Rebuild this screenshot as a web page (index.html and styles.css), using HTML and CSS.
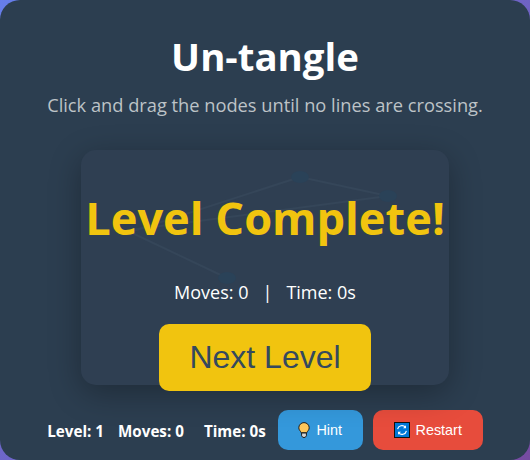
FILE: index.html
```html
<!DOCTYPE html>
<html lang="en">
<head>
<meta charset="utf-8">
<title>Un-tangle</title>
<link rel="stylesheet" href="styles.css">
</head>
<body>
<main class="container">
  <h1 class="title">Un-tangle</h1>
  <p class="subtitle">Click and drag the nodes until no lines are crossing.</p>
  <section class="board">
    <svg class="graph" viewBox="0 0 368 235" width="368" height="235" aria-hidden="true">
      <g class="edges">
        <line x1="49" y1="82" x2="219" y2="27"/>
        <line x1="219" y1="27" x2="307" y2="46"/>
        <line x1="307" y1="46" x2="49" y2="80"/>
        <line x1="49" y1="82" x2="146" y2="128"/>
      </g>
      <g class="nodes">
        <ellipse cx="219" cy="27" rx="9" ry="6"/>
        <ellipse cx="307" cy="46" rx="9" ry="6"/>
        <ellipse cx="146" cy="128" rx="9" ry="6"/>
      </g>
    </svg>
    <div class="overlay">
      <h2 class="complete">Level Complete!</h2>
      <p class="result"><span>Moves: 0</span><span>|</span><span>Time: 0s</span></p>
      <button class="next">Next Level</button>
    </div>
  </section>
  <footer class="footer">
    <div class="stats">
      <span class="stat-level">Level: 1</span>
      <span class="stat-moves">Moves: 0</span>
      <span>Time: 0s</span>
    </div>
    <button class="action hint">
      <svg class="icon" viewBox="0 0 12 16" width="12" height="16" aria-hidden="true"><path d="M6 .6A5.2 5.2 0 0 0 .8 5.8c0 2.2 1.7 3.2 2.5 5h5.4c.8-1.8 2.5-2.8 2.5-5A5.2 5.2 0 0 0 6 .6z" fill="#fdc75b" stroke="#1d1d1d"/><path d="M3.6 11h4.8v2.8L7.2 15.4H4.8l-1.2-1.6z" fill="#d4d4d4" stroke="#1d1d1d"/></svg>
      Hint
    </button>
    <button class="action restart">
      <svg class="icon" viewBox="0 0 16 16" width="16" height="16" aria-hidden="true"><rect x=".5" y=".5" width="15" height="15" fill="#0078d7" stroke="#111"/><path d="M3.6 7.2A4.5 4.5 0 0 1 11.4 5.2M12.4 8.8A4.5 4.5 0 0 1 4.6 10.8" fill="none" stroke="#fff" stroke-width="1.2"/><path d="M12 3.2v3h-3zM4 12.8v-3h3z" fill="#fff"/></svg>
      Restart
    </button>
  </footer>
</main>
</body>
</html>
```
FILE: styles.css
```css
* { box-sizing: border-box; }
html, body { margin: 0; height: 100%; }
body {
  width: 530px;
  height: 460px;
  overflow: hidden;
  background: linear-gradient(135deg, #667eea, #764ba2);
  font-family: "Open Sans", "Noto Sans", sans-serif;
}
.container {
  width: 530px;
  height: 460px;
  background: #2c3e50;
  border-radius: 20px;
  padding: 30px 0 0;
  display: flex;
  flex-direction: column;
  align-items: center;
  color: #fff;
}
.title {
  margin: 0;
  font-size: 38.4px;
  line-height: 52px;
  font-weight: 700;
}
.subtitle {
  margin: 11px 0 0;
  font-size: 18.25px;
  line-height: 24px;
  color: #bdc3c7;
}
.board {
  position: relative;
  width: 368px;
  height: 235px;
  margin-top: 33px;
  border-radius: 15px;
  background: #2f3f52;
  box-shadow: 0 8px 32px rgba(0, 0, 0, .3);
}
.graph { display: block; }
.edges line { stroke: #354659; stroke-width: 2; }
.nodes ellipse { fill: #2a4258; }
.overlay {
  position: absolute;
  inset: 0;
  display: flex;
  flex-direction: column;
  align-items: center;
}
.complete {
  margin: 35px 0 0;
  font-size: 45.2px;
  line-height: 66px;
  font-weight: 700;
  color: #f1c40f;
  white-space: nowrap;
}
.result {
  margin: 29px 0 0;
  font-size: 18px;
  line-height: 24px;
  display: flex;
  gap: 14px;
}
.next {
  margin-top: 20px;
  width: 212px;
  height: 67px;
  flex: none;
  border: 0;
  border-radius: 10px;
  background: #f1c40f;
  color: #34495e;
  font: 32px "Liberation Sans", Arial, sans-serif;
}
.footer {
  margin-top: 25px;
  display: flex;
  align-items: center;
  gap: 10px;
}
.stats {
  display: flex;
  gap: 20px;
  padding-top: 2px;
  font-size: 15.2px;
  font-weight: 700;
  margin-right: 2px;
}
.stat-level { margin-right: -6px; }
.action {
  height: 40px;
  border: 0;
  border-radius: 10px;
  color: #fff;
  font: 14.4px "Liberation Sans", Arial, sans-serif;
  display: flex;
  align-items: center;
  justify-content: center;
  gap: 6px;
  padding: 0;
}
.icon { display: block; }
.hint { width: 85px; background: #3498db; }
.restart { width: 110px; background: #e74c3c; }
```
